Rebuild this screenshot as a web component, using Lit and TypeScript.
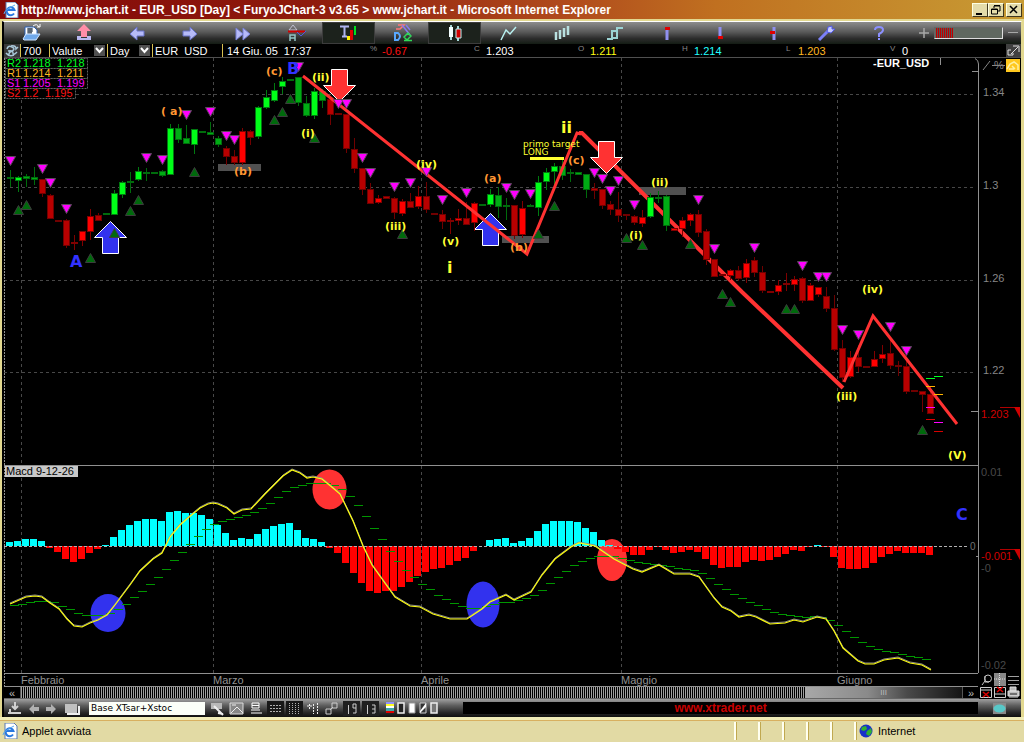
import { LitElement, html, svg, css } from "lit";
import { customElement, property } from "lit/decorators.js";

type Kind = "G" | "g" | "R" | "r";
/** kind, body top, body bottom, wick high, wick low */
type Candle = [Kind, number, number, number, number];

const candles: Candle[] = [
  ["g", 177, 178, 170, 187], ["G", 177, 181, 176, 192], ["g", 176, 179, 174, 187], ["g", 177, 180, 167, 185],
  ["r", 179, 194, 179, 197], ["r", 195, 219, 194, 219], ["r", 220, 222, 220, 222], ["r", 220, 246, 219, 248],
  ["R", 242, 244, 235, 250], ["R", 231, 241, 231, 246], ["R", 216, 232, 209, 240], ["r", 215, 221, 213, 221],
  ["g", 213, 215, 213, 215], ["G", 193, 215, 190, 215], ["G", 182, 195, 181, 198], ["g", 181, 183, 172, 193],
  ["G", 171, 180, 167, 181], ["g", 172, 174, 168, 181], ["g", 172, 174, 172, 174], ["g", 171, 176, 170, 177],
  ["G", 128, 175, 124, 175], ["g", 128, 140, 124, 143], ["g", 138, 144, 125, 144], ["G", 129, 145, 129, 154],
  ["g", 131, 133, 131, 133], ["g", 132, 135, 122, 135], ["g", 138, 145, 136, 147], ["r", 148, 157, 146, 165],
  ["r", 156, 163, 150, 165], ["R", 131, 163, 128, 165], ["r", 131, 138, 130, 145], ["G", 107, 137, 106, 139],
  ["G", 97, 108, 90, 109], ["G", 90, 101, 83, 102], ["G", 81, 87, 77, 94], ["g", 79, 81, 79, 81],
  ["g", 77, 103, 77, 106], ["g", 103, 116, 96, 117], ["G", 91, 116, 88, 119], ["g", 91, 101, 89, 108],
  ["r", 99, 115, 99, 125], ["r", 113, 115, 113, 115], ["r", 114, 149, 114, 153], ["r", 149, 169, 138, 173],
  ["r", 168, 190, 168, 195], ["r", 189, 204, 183, 204], ["R", 198, 203, 195, 204], ["r", 196, 199, 196, 199],
  ["r", 198, 213, 197, 219], ["R", 201, 214, 199, 216], ["r", 201, 208, 193, 208], ["R", 196, 207, 186, 209],
  ["r", 196, 210, 182, 213], ["r", 213, 215, 213, 215], ["r", 214, 222, 210, 229], ["R", 220, 222, 218, 234],
  ["R", 218, 221, 209, 225], ["r", 218, 225, 202, 225], ["R", 203, 223, 202, 231], ["g", 204, 206, 204, 206],
  ["G", 194, 205, 189, 207], ["g", 195, 207, 187, 218], ["g", 205, 207, 198, 220], ["r", 205, 236, 205, 239],
  ["R", 208, 235, 201, 238], ["g", 205, 207, 204, 207], ["G", 182, 208, 176, 216], ["G", 172, 182, 168, 190],
  ["G", 166, 172, 163, 187], ["g", 166, 176, 160, 180], ["g", 172, 174, 169, 182], ["g", 172, 175, 172, 175],
  ["g", 174, 190, 174, 198], ["r", 188, 191, 183, 199], ["r", 189, 206, 189, 209], ["r", 204, 210, 201, 215],
  ["r", 209, 216, 192, 222], ["r", 214, 216, 214, 220], ["r", 216, 223, 215, 225], ["R", 217, 224, 210, 227],
  ["G", 197, 217, 193, 218], ["g", 197, 199, 191, 203], ["g", 196, 226, 195, 231], ["R", 228, 231, 228, 231],
  ["R", 220, 229, 217, 237], ["R", 214, 221, 213, 226], ["r", 214, 233, 210, 237], ["r", 231, 260, 229, 265],
  ["r", 259, 277, 259, 277], ["r", 274, 276, 274, 276], ["R", 270, 276, 269, 280], ["r", 270, 279, 266, 281],
  ["R", 263, 278, 259, 283], ["r", 260, 273, 257, 277], ["r", 272, 291, 266, 293], ["R", 291, 293, 291, 293],
  ["R", 285, 292, 280, 295], ["R", 283, 285, 273, 291], ["R", 279, 285, 276, 291], ["r", 278, 301, 277, 303],
  ["R", 285, 301, 283, 301], ["R", 287, 295, 287, 297], ["r", 296, 309, 287, 312], ["r", 308, 350, 295, 351],
  ["r", 348, 378, 340, 382], ["R", 357, 377, 351, 378], ["r", 357, 367, 345, 372], ["r", 366, 368, 366, 368],
  ["R", 359, 367, 351, 367], ["R", 354, 359, 345, 363], ["r", 353, 366, 339, 369], ["r", 365, 367, 361, 376],
  ["r", 366, 392, 357, 394], ["r", 390, 392, 390, 392], ["r", 391, 395, 391, 412], ["r", 394, 414, 387, 414],
];

/** candle index, top of the marker */
const sellMarks = [
  [0, 156], [4, 164], [5, 178], [7, 204], [17, 153], [19, 155], [22, 110], [25, 107], [27, 131], [28, 135],
  [41, 99], [42, 99], [44, 153], [45, 168], [48, 182], [50, 178], [52, 167], [54, 195], [57, 188],
  [62, 183], [63, 190], [65, 189], [73, 168], [74, 174], [75, 186], [76, 176], [78, 200], [86, 195], [88, 244],
  [93, 243], [99, 261], [101, 272], [102, 272], [104, 325], [106, 330], [110, 322], [112, 346], [36, 62],
];
const buyMarks = [
  [1, 204], [2, 199], [10, 252], [13, 227], [15, 205], [16, 194], [23, 166], [33, 114], [34, 106], [35, 93],
  [38, 132], [49, 228], [66, 228], [68, 200], [77, 232], [79, 239], [85, 238], [89, 288], [90, 296],
  [97, 303], [98, 303], [114, 424],
];

const histogram = [
  4, 5, 7, 7, 5, -2, -6, -13, -16, -13, -7, -3, 1, 9, 16, 21, 25, 27, 27, 25, 34, 35, 33, 33, 31, 27, 21, 13, 6, 8,
  7, 12, 17, 20, 22, 23, 16, 8, 7, 4, -2, -7, -17, -27, -37, -45, -47, -45, -45, -41, -36, -30, -26, -23, -22, -19,
  -15, -12, -5, 0, 6, 7, 8, 3, 5, 8, 15, 22, 25, 25, 25, 24, 18, 14, 6, 1, -3, -6, -9, -9, -4, -1, -4, -7, -6, -4,
  -6, -13, -19, -22, -21, -21, -16, -14, -15, -14, -11, -8, -4, -5, -1, 1, -1, -11, -22, -23, -23, -22, -17, -11,
  -8, -5, -7, -7, -7, -9,
];

const signal = [
  605, 604, 602, 601, 601, 602, 606, 609, 613, 615, 615, 615, 613, 609, 604, 597, 591, 584, 577, 569, 560, 552, 544,
  536, 529, 524, 521, 519, 517, 515, 512, 508, 503, 497, 491, 487, 485, 483, 483, 483, 485, 489, 496, 505, 516, 528,
  539, 551, 561, 570, 577, 584, 589, 595, 599, 603, 606, 608, 608, 606, 604, 602, 602, 600, 598, 595, 590, 583, 577,
  571, 565, 561, 558, 556, 556, 556, 558, 560, 562, 563, 564, 565, 566, 568, 569, 570, 573, 578, 584, 589, 594, 598,
  602, 605, 609, 612, 614, 615, 616, 617, 616, 617, 620, 625, 631, 637, 642, 646, 649, 651, 652, 654, 656, 657, 659,
];

const macd =
  "10,604 26,597 35,596 42,597 50,603 59,609 67,619 74,626 82,627 90,623 98,620 107,615 115,605 130,585 140,571 " +
  "153,559 162,553 170,537 180,525 188,518 200,508 208,504 213,503 218,504 227,508 234,514 242,510 251,509 265,494 " +
  "283,476 292,470 300,473 307,478 313,477 322,479 333,488 340,494 353,521 363,546 372,565 382,579 395,597 410,606 " +
  "420,607 433,614 450,619 467,619 482,609 490,602 506,595 514,600 531,592 542,575 555,559 571,547 579,543 595,546 " +
  "614,559 633,569 642,572 659,565 674,574 690,574 699,577 714,598 722,607 731,611 739,617 749,615 756,617 770,624 " +
  "785,623 794,620 803,622 817,617 826,619 834,631 843,648 858,661 865,664 874,664 884,660 898,658 910,663 922,665 931,670";

const months = [[21, "Febbraio"], [213, "Marzo"], [421, "Aprile"], [621, "Maggio"], [837, "Giugno"]] as const;

const waves = [
  ["o", 161, 115, "("], ["o", 170, 115, "a)"], ["o", 234, 175, "(b)"], ["o", 266, 75, "(c)"], ["o", 484, 182, "(a)"],
  ["o", 510, 251, "(b)"], ["o", 568, 164, "(c)"], ["y", 301, 137, "(i)"], ["y", 312, 81, "(ii)"],
  ["y", 385, 230, "(iii)"], ["y", 416, 168, "(iv)"], ["y", 442, 245, "(v)"], ["y", 651, 186, "(ii)"],
  ["y", 629, 239, "(i)"], ["y", 862, 293, "(iv)"], ["y", 836, 400, "(iii)"], ["y", 948, 459, "(V)"],
  ["y big", 447, 273, "i"], ["y big", 561, 133, "ii"], ["b big", 70, 267, "A"], ["b big", 287, 74, "B"],
  ["b big", 956, 520, "C"],
] as const;

const levels = [
  ["#00ff20", 926, 378], ["#00ff20", 934, 376], ["#ffb400", 926, 386], ["#ffb400", 934, 394],
  ["#ff00ff", 926, 407], ["#ff00ff", 934, 422], ["#d80000", 926, 419], ["#d80000", 934, 431],
] as const;

const pivots = [
  ["R2", "1.218", "1.218", "#00ff20"], ["R1", "1.214", "1.211", "#ffb820"],
  ["S1", "1.205", "1.199", "#ff00ff"], ["S2", "1.2", "1.195", "#ff1414"],
] as const;

@customElement("price-chart")
export class PriceChart extends LitElement {
  static styles = css`
    :host { display: block; min-width: 0; background: #000; }
    svg { display: block; width: 100%; height: auto; font: 11px "Liberation Sans", Arial, sans-serif; }
    .grid { stroke: #484848; stroke-dasharray: 3 3; fill: none; }
    .rule { stroke: #909090; fill: none; }
    .G { fill: #00ff18; stroke: #007a10; }
    .g { fill: #00ac14; stroke: #006c0c; }
    .R { fill: #ff0000; stroke: #800000; }
    .r { fill: #b80000; stroke: #700000; }
    .sell { fill: #ff00ff; stroke: #5c485c; }
    .buy { fill: #006a0c; stroke: #3c3c3c; }
    .up { fill: #00ffff; }
    .down { fill: #ff0000; }
    .trend { stroke: #ff3232; fill: none; }
    .arrow { stroke: #fff; }
    .red { fill: #ff3232; }
    .blue { fill: #3232ee; }
    .zone { fill: #505050; }
    .wave { font: bold 11px "DejaVu Sans", Verdana, sans-serif; }
    .big { font-size: 16px; }
    .o { fill: #ff9632; }
    .y { fill: #ffff32; }
    .b { fill: #3232ff; }
    .note { font: 9px "DejaVu Sans", Verdana, sans-serif; fill: #ffff32; }
    .month { fill: #909090; }
    .symbol { fill: #fff; font-weight: bold; }
    .signal { stroke: #009600; }
    .macd { stroke: #ffff10; fill: none; stroke-width: 1.2; }
    .glow { stroke: #8c8c8c; fill: none; stroke-width: 1; }
    .tag { fill: #c8c8c8; }
    .box { fill: #000; stroke: #606060; stroke-dasharray: 2 1; }
  `;

  private candle([k, top, bottom, high, low]: Candle, i: number) {
    const x = 10 + 8 * i;
    return svg`<g class=${k} shape-rendering="crispEdges">
      <line x1=${x + 0.5} x2=${x + 0.5} y1=${high} y2=${low}></line>
      <rect x=${x - 2.5} y=${top + 0.5} width="6" height=${Math.max(1, bottom - top - 1)}></rect></g>`;
  }

  render() {
    return html`<svg viewBox="4 58 975 629" role="img" aria-label="EUR_USD">
      ${[94, 187, 280, 372].map((y) => svg`<line class="grid" x1="4" x2="975" y1=${y + 0.5} y2=${y + 0.5}></line>`)}
      ${months.map(([x, name]) => svg`
        <line class="grid" x1=${x + 0.5} x2=${x + 0.5} y1="58" y2="673"></line>
        <text class="month" x=${x} y="684">${name}</text>`)}
      <path class="rule" stroke-dasharray="2 1" d="M4.5 58V687"></path>
      <path class="rule" d="M4 465.5H978M4 673.5H978M975 58.5Q978.500 60 978.500 64V673M972 71.500H978M971 411.500H978M940.500 58V65M976 556.500H978M4 686.500H978"></path>

      <rect class="zone" x="218" y="164" width="43" height="7"></rect>
      <rect class="zone" x="502" y="236" width="47" height="7"></rect>
      <rect class="zone" x="639" y="187" width="47" height="8"></rect>
      <path class="arrow blue" d="M110.500 221.500L126.500 237.500H118.500V253.500H102.500V237.500H94.500Z"></path>
      <path class="arrow blue" d="M490.500 213.500L506.500 229.500H498.500V245.500H482.500V229.500H474.500Z"></path>
      <path class="trend" stroke-width="4" d="M579 133L582 133L742 292L843 388"></path>
      ${candles.map((c, i) => this.candle(c, i))}
      <path class="trend" stroke-width="3" d="M303 76L527 254L577 133L581 134M844 382L873 316L957 424"></path>
      <path class="arrow red" d="M331.500 69.500H347.500V85.500H355.500L339.500 101.500L323.500 85.500H331.500Z"></path>
      <path class="arrow red" d="M598.500 141.500H614.500V157.500H622.500L606.500 173.500L590.500 157.500H598.500Z"></path>
      ${sellMarks.map(([i, y]) => svg`<path class="sell" d="M${5.5 + 8 * i} ${y + 0.5}h10l-5 9z"></path>`)}
      ${buyMarks.map(([i, y]) => svg`<path class="buy" d="M${5.5 + 8 * i} ${y + 10.5}h10l-5 -9z"></path>`)}
      ${levels.map(([c, x, y]) => svg`<rect fill=${c} x=${x} y=${y} width="9" height="1"></rect>`)}
      <rect class="y" x="530" y="157" width="34" height="3"></rect>
      ${waves.map(([c, x, y, t]) => svg`<text class="wave ${c}" x=${x} y=${y}>${t}</text>`)}
      <text class="note" x="523" y="147">primo target</text>
      <text class="note" x="523" y="155">LONG</text>
      <text class="symbol" x="873" y="67">-EUR_USD</text>

      ${pivots.map(([n, a, b, c], i) => svg`
        <rect class="box" x="5.5" y=${58.5 + 10 * i} width=${i === 3 ? 70 : 82} height="10"></rect>
        <text fill=${c} x="7" y=${67 + 10 * i}>${n}</text>
        <text fill=${c} x="23" y=${67 + 10 * i}>${a}</text>
        <text fill=${c} x=${i === 3 ? 45 : 57} y=${67 + 10 * i}>${b}</text>`)}

      <ellipse class="blue" cx="108" cy="613" rx="17.500" ry="19"></ellipse>
      <ellipse class="red" cx="329.500" cy="489.500" rx="17" ry="20"></ellipse>
      <ellipse class="blue" cx="483" cy="604.500" rx="16.500" ry="23"></ellipse>
      <ellipse class="red" cx="612" cy="560" rx="15" ry="21"></ellipse>
      ${histogram.map((h, i) => svg`<rect class=${h > 0 ? "up" : "down"} x=${6 + 8 * i} width="7"
        y=${h > 0 ? 546 - h : 546} height=${Math.abs(h)}></rect>`)}
      <line x1="4" x2="968" y1="546.500" y2="546.500" stroke="#b0b0b0" stroke-dasharray="3 2"></line>
      ${signal.map((y, i) => svg`<line class="signal" x1=${10 + 8 * i} x2=${19 + 8 * i} y1=${y + 0.5} y2=${y + 0.5}></line>`)}
      <polyline class="glow" transform="translate(0 -1)" points=${macd}></polyline>
      <polyline class="macd" points=${macd}></polyline>
      <rect class="tag" x="5" y="466" width="73" height="11"></rect>
      <text x="6" y="475">Macd 9-12-26</text>
      <text x="970" y="550" fill="#707070" font-size="10">0</text>
    </svg>`;
  }
}

@customElement("price-axis")
export class PriceAxis extends LitElement {
  static styles = css`
    :host { display: block; background: #000; }
    svg { display: block; width: 100%; height: auto; font: 11px "Liberation Sans", Arial, sans-serif; fill: #868686; }
    .dim { fill: #484848; }
    .last { fill: #d00000; }
  `;
  render() {
    const scale = [["1.34", 96], ["1.3", 189], ["1.26", 282], ["1.22", 374]] as const;
    return html`<svg viewBox="979 58 42 615" role="img" aria-label="1.34 – 1.203">
      <path d="M983 70L990 61" stroke="#868686"></path>
      <text x="994" y="69">%</text><path d="M992 65.500H1005" stroke="#868686"></path>
      <rect x="1006" y="59" width="14" height="13" fill="#ffc81e"></rect>
      <path d="M1007 69L1010 64L1014 62L1018 65V70M1009 69H1014M1012 66L1015 69" fill="none" stroke="#fff0a0" stroke-width="1.500"></path>
      ${scale.map(([t, y]) => svg`<text x="983" y=${y}>${t}</text>`)}
      <text class="last" x="981" y="418">1.203</text>
      <path d="M1000 407.500H1015" stroke="#b00000"></path><path class="last" d="M1014 407H1020V418Z"></path>
      <text class="dim" x="981" y="476">0.01</text>
      <text class="last" x="981" y="560">-0.001</text>
      <path d="M1000 549.500H1015" stroke="#b00000"></path><path class="last" d="M1014 549H1020V560Z"></path>
      <text class="dim" x="981" y="572">-0</text>
      <text class="dim" x="981" y="669">-0.02</text>
    </svg>`;
  }
}

const tools = [
  ["Open", svg`<path d="M4 4h9l3 3v7H4z" fill="#fff" stroke="#2a62b8"/><path d="M6 6h6M6 8h6M6 10h5M8 5v6M10 5v6" stroke="#234"/><path d="M2 16l3-5h14l-4 6H3z" fill="#6fa8ea" stroke="#cfe4ff"/><path d="M12 3q4-3 6 1m-2 0h3V1" fill="none" stroke="#fff"/>`],
  ["Upload", svg`<path d="M10 1l7 7h-4v6H7V8H3z" fill="#ff8ea8"/><path d="M3 13h4v2h6v-2h4v4H3z" fill="#b8b8f0"/>`],
  ["Back", svg`<path d="M10 4v4h7v5h-7v4l-7-6z" fill="#b6baf8" stroke="#6670c8"/>`],
  ["Forward", svg`<path d="M10 4v4H3v5h7v4l7-6z" fill="#b6baf8" stroke="#6670c8"/>`],
  ["Last", svg`<path d="M3 5l7 6-7 6zM10 5l7 6-7 6z" fill="#b6baf8" stroke="#7680d8"/>`],
  ["Scale", svg`<path d="M3 7l4-5 4 5z" fill="none" stroke="#c0c0d0"/><path d="M2 8.500h17" stroke="#d00000" stroke-width="2"/><path d="M4 18v-6h5v6M4 15h5" fill="none" stroke="#90c4c4" stroke-width="1.500"/><path d="M11 9l4 4 5-5" fill="none" stroke="#5058e0"/>`],
  ["Trading", svg`<path d="M1 3.500h9M5.500 3v10M3 13.500h5" stroke="#b0b4f0" stroke-width="2"/><path d="M8 13h3v4H8z" fill="#ffee00"/><path d="M11 7h3v10h-3z" fill="#e00000"/><path d="M15 3h2v9h-2z" fill="#00e020"/>`],
  ["Objects", svg`<path d="M6 2h6L8 6H4" fill="none" stroke="#ff7878" stroke-width="1.500"/><path d="M3 10h3q4 3 0 7H3z" fill="none" stroke="#58a8ff" stroke-width="2"/><path d="M10 2l8 10M14 2l4 5" stroke="#8878f0" stroke-width="1.500"/><path d="M12 14l4-4 3 3-4 4zM12 17.500h8" fill="none" stroke="#30d858" stroke-width="1.500"/>`],
  ["Candlestick", svg`<path d="M6 2v15M13 3v15" stroke="#a8d8d8" stroke-width="2"/><path d="M4 4h4v10H4z" fill="#f4ffff"/><path d="M11 6h5v9h-5z" fill="#d00000" stroke="#b8f0f0"/>`],
  ["Line", svg`<path d="M3 17l5-10 4 4 6-7" fill="none" stroke="#b8f0f0" stroke-width="1.500"/>`],
  ["Bars", svg`<path d="M5 9v8M9 7v9M13 5v9M17 3v9" stroke="#b8e0e0" stroke-width="2.500"/>`],
  ["Steps", svg`<path d="M3 16h5V8h5M9 15h4V5h6" fill="none" stroke="#9cd4d4" stroke-width="2"/>`],
  ["Marker top", svg`<path d="M10 6v11" stroke="#9090f0" stroke-width="3"/><path d="M8 4h5v3H8z" fill="#e00000"/>`],
  ["Marker bottom", svg`<path d="M10 4v10" stroke="#9090f0" stroke-width="3"/><path d="M8 13h5v3H8z" fill="#e00000"/>`],
  ["Marker side", svg`<path d="M11 4v13" stroke="#9090f0" stroke-width="3"/><path d="M7 8h5v3H7z" fill="#e00000"/>`],
  ["Settings", svg`<path d="M3 17l9-9" stroke="#7c80f8" stroke-width="3"/><path d="M16 3l-4 1-1 5 4 1 4-4h-3z" fill="#c4c8ff" stroke="#5058e8"/>`],
  ["Help", svg`<path d="M6 7q0-3 4-3t4 3q0 2-4 4v3M10 15v2" fill="none" stroke="#8c90ff" stroke-width="2"/>`],
] as const;

const quotes = [
  ["%", "-0.67", "#ff1010"], ["C", "1.203", "#ffffff"], ["O", "1.211", "#ffff10"],
  ["H", "1.214", "#20ffff"], ["L", "1.203", "#ffb820"], ["V", "0", "#ffffff"],
] as const;

const lowTools = [
  [14, svg`<path d="M1 12h13M3 8v4h8M8 1v7M5 5l3 3 3-3" fill="none" stroke="#d0d0d0" stroke-width="2"/>`, "wide"],
  [37, svg`<path d="M8 3v3h5v4H8v3L3 8z" fill="#b0b0b0"/>`, ""],
  [55, svg`<path d="M7 3v3H2v4h5v3l5-5z" fill="#b0b0b0"/>`, ""],
  [75, svg`<path d="M1 3h12v9H1z" fill="#c0c0c0"/><path d="M3 13h12V5" fill="none" stroke="#eee" stroke-width="2"/>`, "wide"],
] as const;

const lowTools2 = [
  ["Edit", svg`<path d="M1 2h11v6H1z" fill="#b8b8b8"/><path d="M4 5l9 9M8 12l5 1" stroke="#eee" stroke-width="2"/>`],
  ["Image", svg`<path d="M1 2h13v11H1z" fill="#888" stroke="#ddd"/><path d="M2 12l6-6 6 6M3 4h4" stroke="#eee" fill="none"/>`],
  ["List", svg`<path d="M4 2h7v5H4zM4 4.500h7M3 9h9M3 12h11" fill="none" stroke="#fff"/>`],
  ["Rows", svg`<path d="M0 0h19v16H0z" fill="#181818"/><path d="M3 4.500h12M3 7.500h12M3 10.500h12" stroke="#b0b0b0" stroke-dasharray="2 1"/>`],
  ["Columns", svg`<path d="M0 0h19v16H0z" fill="#181818"/><path d="M3.500 2v11M6.500 2v11M9.500 2v11M12.500 2v11" stroke="#b0b0b0" stroke-dasharray="1 1"/>`],
  ["Dots", svg`<path d="M2 5h5M4.500 3v5M8.500 3v10M12.500 2v11" stroke="#eee" stroke-dasharray="2 1"/>`],
  ["Link", svg`<path d="M2 8h5v5H2zM8 2h5v5H8zM6 9l3-3" fill="none" stroke="#ccc"/>`],
  ["One nine", svg`<path d="M0 0h19v16H0z" fill="#202020"/><path d="M5.500 4v9M10 3h3v4h-3zM13 7v5h-3" fill="none" stroke="#ccc"/>`],
  ["One three", svg`<path d="M0 0h19v16H0z" fill="#202020"/><path d="M5.500 4v9M10 4h3v4h-3M13 8v4h-3" fill="none" stroke="#ccc"/>`],
] as const;

const swatches = [
  svg`<path d="M0 1h8v2H0z" fill="#9090ff"/><path d="M0 3h8v2H0z" fill="#ffff20"/><path d="M0 5h8v2H0z" fill="#fff"/><path d="M0 7h8v3H0z" fill="#40a8a8"/><path d="M0 10h8v2H0z" fill="#e00000"/>`,
  svg`<path d="M1 2h6v10H1z" fill="#222" stroke="#eee" stroke-width="1.500"/>`,
  svg`<path d="M1 2h6v10H1z" fill="#fff" stroke="#999"/>`,
  svg`<path d="M1 2h6v10H1z" fill="#333" stroke="#ccc"/><path d="M1 10L7 2v4l-6 6z" fill="#fff"/>`,
  svg`<path d="M1 2h6v10H1z" fill="#777" stroke="#eee" stroke-width="1.500"/>`,
];

const sideTools = [
  ["Zoom", svg`<circle cx="8" cy="5.500" r="3.500" fill="none" stroke="#c8c8c8"/><path d="M5 3v6H9M5 8l-3 4" fill="none" stroke="#c8c8c8"/>`],
  ["Grid", svg`<path d="M0 0h12v13H0z" fill="#888"/><path d="M0 6h12M5.500 0v13" stroke="#ddd" stroke-dasharray="1 1"/>`],
  ["Menu", svg`<path d="M1 3.500h11M1 7.500h11M1 11.500h11" stroke="#a0a0a0"/>`],
  ["Remove below", svg`<path d="M.5 1.500h11v10H.5zM1 4h10" fill="none" stroke="#ccc"/><path d="M3 6l6 5M9 6l-6 5" stroke="#e00000" stroke-width="1.500"/>`],
  ["Remove above", svg`<path d="M.5 1.500h11v10H.5zM1 8h10" fill="none" stroke="#ccc"/><path d="M3 1l6 5M9 1L3 6" stroke="#e00000" stroke-width="1.500"/>`],
  ["Print", svg`<path d="M3 1h6v4H3zM1 5h11v5H1zM2 11h9" fill="#bbb" stroke="#ddd"/><path d="M3 8h7" stroke="#222"/>`],
] as const;

@customElement("app-root")
export class AppRoot extends LitElement {
  @property() symbol = "EUR  USD";

  static styles = css`
    :host { display: flex; flex-direction: column; min-height: 100vh; background: #e2daa4; font: 11px/14px "Liberation Sans", Arial, sans-serif; color: #fff; }
    * { box-sizing: border-box; }
    button { appearance: none; border: 0; padding: 0; margin: 0; background: none; color: inherit; font: inherit; display: flex; align-items: center; justify-content: center; }
    svg { display: block; flex: none; }
    .title { display: flex; align-items: center; height: 19px; padding: 0 2px 0 3px; gap: 2px; background: linear-gradient(90deg, #840808 0%, #8e1a0c 30%, #b04a1c 55%, #c07020 70%, #c89c34 100%); }
    .title h1 { flex: 1; margin: 0; font: bold 12px/16px "Liberation Sans", Arial, sans-serif; white-space: nowrap; overflow: hidden; }
    .win { width: 16px; height: 14px; background: #e4dcaa; border: 1px solid; border-color: #ffffe0 #403820 #403820 #ffffe0; }
    .pair { display: flex; }
    .frame { border: solid #e2d890; border-width: 2px 2px 0 2px; background: #000; }
    .applet { border-top: 1px solid #fff; border-left: 2px solid #000; border-right: 1px solid #e2d890; }
    .tools { display: grid; grid-template-columns: repeat(17, minmax(0, 53fr)) minmax(0, 116fr); height: 22px; background: linear-gradient(#8c8c8c, #5a5a5a 45%, #2c2c2c 75%, #141c14); }
    .tools .on { background: #1c221c; border: 1px solid #3c3c3c; }
    .gain { display: flex; align-items: center; gap: 5px; padding: 0 3px 0 14px; }
    .gain button { flex: none; width: 10px; }
    .gain input { appearance: none; flex: 1; min-width: 0; height: 12px; margin: 0; border: 1px solid; border-color: #666 #ddd #ddd #666; background: repeating-linear-gradient(90deg, #c00000 0 1px, #5a5050 1px 2px) 1px 0 / 17px 100% no-repeat, #606860; }
    .gain input::-webkit-slider-thumb { appearance: none; width: 1px; height: 8px; }
    .info { display: flex; height: 14px; border-bottom: 1px solid #505050; white-space: pre; line-height: 14px; }
    .cell { display: flex; align-items: center; padding-left: 2px; border-left: 1px solid #d8c050; }
    .logo { width: 16px; background: #383838; }
    .count { width: 29px; }
    .market { width: 58px; }
    .period { width: 45px; }
    .name { width: 70px; }
    .date { width: 148px; padding-left: 4px; }
    select { appearance: none; flex: 1; min-width: 0; height: 13px; border: 0; padding: 0; color: #fff; font: inherit; background: none; }
    .drop { pointer-events: none; margin-right: 2px; }
    .quotes { flex: 1; display: grid; grid-template-columns: repeat(6, 1fr); padding-right: 12px; }
    .quote { display: flex; gap: 2px; }
    .quote small { width: 10px; font-size: 8px; line-height: 10px; color: #888; }
    .body { display: grid; grid-template-columns: minmax(0, 975fr) minmax(0, 42fr); }
    .side { display: flex; flex-direction: column; }
    .pad { display: grid; grid-template-columns: repeat(3, 13px); grid-auto-rows: 13px; justify-content: space-between; padding: 0 1px; }
    .scroll { display: flex; height: 12px; border-bottom: 1px solid #666; color: #bbb; font-size: 11px; }
    .scroll button { width: 16px; line-height: 8px; }
    .track { flex: 1; display: flex; border: solid #555; border-width: 0 1px; background: repeating-linear-gradient(90deg, #a0a0a0 0 1px, #000 1px 2px); }
    .gone { flex: 785; }
    .scroll .thumb { flex: 157; background: linear-gradient(90deg, #a8a8a8, #8a8a8a 40%, #4a4a4a 65%, #141414); font-size: 8px; }
    .low { display: flex; align-items: center; height: 18px; background: linear-gradient(#a0a0a0, #606060 35%, #282828 75%, #101010); }
    .low button { flex: none; width: 18px; height: 15px; }
    .low .wide { width: 21px; }
    .low .mid { width: 19px; }
    .low .chip { width: 11px; }
    .low input { width: 116px; height: 13px; margin: 0 4px 0 7px; border: 0; padding: 0 2px; background: #fbfff8; color: #000; font: 9px/13px "DejaVu Sans", Verdana, sans-serif; }
    .chips { display: flex; margin: 0 24px 0 4px; }
    .ad { flex: 1; height: 12px; background: #000; font: bold 12px/12px "Liberation Sans", Arial, sans-serif; text-align: center; }
    .ad a { color: #c80000; text-decoration: none; }
    .low .eye { width: 43px; }
    .status { display: flex; align-items: center; flex: 1; min-height: 25px; border-top: 3px solid #f0ecb8; color: #000; box-shadow: inset 0 1px 0 #d8b060; padding-left: 2px; }
    .status p { flex: 1; margin: 0; padding-left: 4px; }
    .slots { display: flex; }
    .slots i, .zone { height: 18px; border-left: 2px solid #fffff0; box-shadow: inset 1px 0 0 #c0a850; }
    .slots i { width: 24px; }
    .zone { display: flex; align-items: center; gap: 5px; width: 170px; padding-left: 3px; }
  `;

  private icon(art: unknown, w = 20, h = 20) {
    return html`<svg width=${w} height=${h} viewBox="0 0 ${w} ${h}" aria-hidden="true">${art}</svg>`;
  }

  private page() {
    return this.icon(svg`<path d="M3 0h9l3 3v13H3z" fill="#fff" stroke="#5878b0"/><path d="M11 11.500a4 4 0 1 1 .5-3.500H4" fill="none" stroke="#2878e0" stroke-width="2"/><path d="M1 12Q1 8 12 3" fill="none" stroke="#58a8f0"/>`, 16, 16);
  }

  private drop() {
    return html`<svg class="drop" width="11" height="11" viewBox="0 0 11 11" aria-hidden="true"><path d="M0 0h11v11H0z" fill="#505050"></path><path d="M2 3l3.500 4L9 3" fill="none" stroke="#fff" stroke-width="2"></path></svg>`;
  }

  render() {
    return html`
      <header class="title">
        ${this.page()}
        <h1>http://www.jchart.it - EUR_USD [Day] &lt; FuryoJChart-3 v3.65 &gt; www.jchart.it - Microsoft Internet Explorer</h1>
        <div class="pair">
          <button class="win" aria-label="Minimize">${this.icon(svg`<path d="M3 9h6v2H3z"/>`, 14, 12)}</button>
          <button class="win" aria-label="Restore">${this.icon(svg`<path d="M5 2h6v5H9M5 2v2M2.500 5h6v5h-6z" fill="none" stroke="#000"/><path d="M5 1.500h6M2 5.500h7" stroke="#000"/>`, 14, 12)}</button>
        </div>
        <button class="win" aria-label="Close">${this.icon(svg`<path d="M3 2l7 7M10 2L3 9" stroke="#000" stroke-width="1.500"/>`, 14, 12)}</button>
      </header>
      <main class="frame"><div class="applet">
        <nav class="tools">
          ${tools.map(([name, art], i) => html`<button class=${i === 6 || i === 8 ? "on" : ""} aria-label=${name}>${this.icon(art)}</button>`)}
          <div class="gain">
            <button aria-label="Increase">${this.icon(svg`<path d="M0 5h10M5 0v10" stroke="#a8a8a8" stroke-width="1.500"/>`, 10, 10)}</button>
            <input type="range" aria-label="Zoom" min="0" max="100" value="25">
            <button aria-label="Decrease">${this.icon(svg`<path d="M0 4.500h10" stroke="#a8a8a8"/>`, 10, 10)}</button>
          </div>
        </nav>
        <div class="info">
          <div class="logo">${this.icon(svg`<path d="M3 5q1-4 5-2t0 4-3 4M7 2q5-1 5 3l2-2M4 7q5-1 5 2t4-1M2 9q3 4 8 2" fill="none" stroke="#a8c8d8" stroke-width="1.500"/>`, 16, 13)}</div>
          <div class="cell count">700</div>
          <div class="cell market"><select aria-label="Market"><option>Valute</option></select>${this.drop()}</div>
          <div class="cell period"><select aria-label="Period"><option>Day</option></select>${this.drop()}</div>
          <div class="cell name">${this.symbol}</div>
          <div class="cell date">14 Giu. 05  17:37</div>
          <div class="quotes">
            ${quotes.map(([k, v, c]) => html`<div class="quote"><small>${k}</small><span style="color:${c}">${v}</span></div>`)}
          </div>
          <button aria-label="Detach">${this.icon(svg`<path d="M0 0h15v13H0z" fill="#404040"/><path d="M7 2h6v6M12 3L5 10M5 6H2v5h5V9" fill="none" stroke="#ddd"/>`, 15, 13)}</button>
        </div>
        <div class="body">
          <div>
            <price-chart></price-chart>
            <div class="scroll">
              <button aria-label="Scroll left">«</button>
              <div class="track"><div class="gone"></div><button class="thumb" aria-label="Position">III</button></div>
              <button aria-label="Scroll right">»</button>
            </div>
          </div>
          <div class="side">
            <price-axis></price-axis>
            <div class="pad">${sideTools.map(([name, art]) => html`<button aria-label=${name}>${this.icon(art, 13, 13)}</button>`)}</div>
          </div>
        </div>
        <div class="low">
          ${lowTools.map(([id, art, size]) => html`<button class=${size} aria-label="Layout ${id}">${this.icon(art, 16, 15)}</button>`)}
          <input type="text" aria-label="Layout" value="Base XTsar+Xstoc">
          ${lowTools2.map(([name, art]) => html`<button class="mid" aria-label=${name}>${this.icon(art, 17, 15)}</button>`)}
          <div class="chips">${swatches.map((art, i) => html`<button class="chip" aria-label="Style ${i + 1}">${this.icon(art, 8, 14)}</button>`)}</div>
          <div class="ad"><a href="#">www.xtrader.net</a></div>
          <button class="eye" aria-label="View">${this.icon(svg`<path d="M0 1h13v11H0z" fill="#888"/><ellipse cx="6.500" cy="6.500" rx="6" ry="4" fill="#58c8c8"/>`, 13, 13)}</button>
        </div>
      </div></main>
      <footer class="status">
        ${this.page()}
        <p>Applet avviata</p>
        <div class="slots"><i></i><i></i><i></i><i></i><i></i></div>
        <div class="zone">
          ${this.icon(svg`<circle cx="7" cy="7" r="6.500" fill="#1830c8"/><path d="M3 3l4-1 1 3-3 2-3-1zM8 7l4-3 1 4-3 4-3-2z" fill="#30b030"/>`, 14, 14)}
          Internet
        </div>
      </footer>
    `;
  }
}
